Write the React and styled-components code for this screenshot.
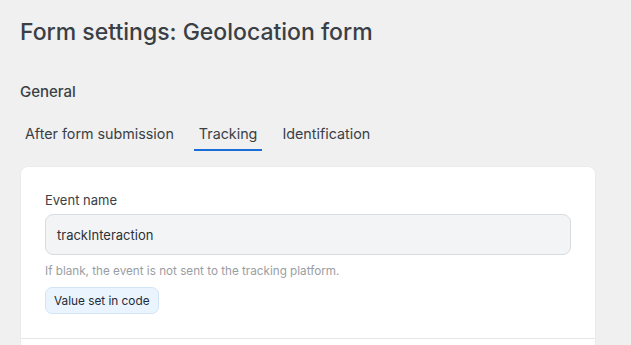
import styled, { createGlobalStyle } from 'styled-components';

const GlobalStyle = createGlobalStyle`
  html, body {
    margin: 0;
    padding: 0;
    background: #f0f0f0;
    font-family: Inter, "Noto Sans", sans-serif;
    overflow: hidden;
  }
`;

const tabs = ['After form submission', 'Tracking', 'Identification'];

function App() {
  return (
    <>
      <GlobalStyle />
      <Page>
        <Title>Form settings: Geolocation form</Title>
        <Section>General</Section>
        <TabBar>
          {tabs.map((tab) => (
            <Tab key={tab} $active={tab === 'Tracking'}>
              {tab}
            </Tab>
          ))}
        </TabBar>
        <Card>
          <CardBody>
            <Label>Event name</Label>
            <Input>trackInteraction</Input>
            <Hint>If blank, the event is not sent to the tracking platform.</Hint>
            <Badge>Value set in code</Badge>
          </CardBody>
          <Divider />
          <CardBody $tall />
        </Card>
      </Page>
    </>
  );
}

export default App;

const Page = styled.div`
  display: flex;
  flex-direction: column;
  padding: 18px 0 0 20px;
  width: 631px;
  height: 345px;
  overflow: hidden;
  box-sizing: border-box;
`;

const Title = styled.h1`
  margin: 0;
  font-size: 23px;
  line-height: 28px;
  font-weight: 500;
  color: #3a3f45;
`;

const Section = styled.h2`
  margin: 36px 0 0;
  font-size: 15px;
  line-height: 20px;
  font-weight: 500;
  color: #3a3f45;
`;

const TabBar = styled.div`
  display: flex;
  gap: 15px;
  margin-top: 22px;
`;

const Tab = styled.div`
  padding: 0 5px 6px;
  font-size: 14.3px;
  line-height: 19px;
  color: #3a3f45;
  border-bottom: 2px solid ${(p) => (p.$active ? '#1a6dd6' : 'transparent')};
`;

const Card = styled.div`
  flex-shrink: 0;
  margin: 16px 0 0 1px;
  width: 574px;
  background: #ffffff;
  border-radius: 7px;
  box-shadow: 0 0 0 1px #ebebeb;
`;

const CardBody = styled.div`
  display: flex;
  flex-direction: column;
  align-items: flex-start;
  padding: 25px 24px 24px;
  min-height: ${(p) => (p.$tall ? '60px' : '0')};
`;

const Label = styled.div`
  font-size: 13px;
  line-height: 16px;
  color: #3a3f45;
`;

const Input = styled.div`
  margin-top: 6px;
  width: 100%;
  height: 41px;
  box-sizing: border-box;
  display: flex;
  align-items: center;
  padding: 0 11px;
  background: #f3f4f5;
  border: 1px solid #d9dcdf;
  border-radius: 8px;
  font-size: 13px;
  color: #2c3136;
`;

const Hint = styled.div`
  margin-top: 9px;
  font-size: 11.7px;
  line-height: 14px;
  color: #9a9ea3;
`;

const Badge = styled.div`
  margin-top: 9px;
  height: 27px;
  box-sizing: border-box;
  display: flex;
  align-items: center;
  padding: 0 8px;
  background: #eaf4fe;
  border: 1px solid #d3e5f5;
  border-radius: 7px;
  font-size: 11.8px;
  color: #1e2b3a;
`;

const Divider = styled.div`
  height: 1px;
  background: #e6e6e6;
`;
